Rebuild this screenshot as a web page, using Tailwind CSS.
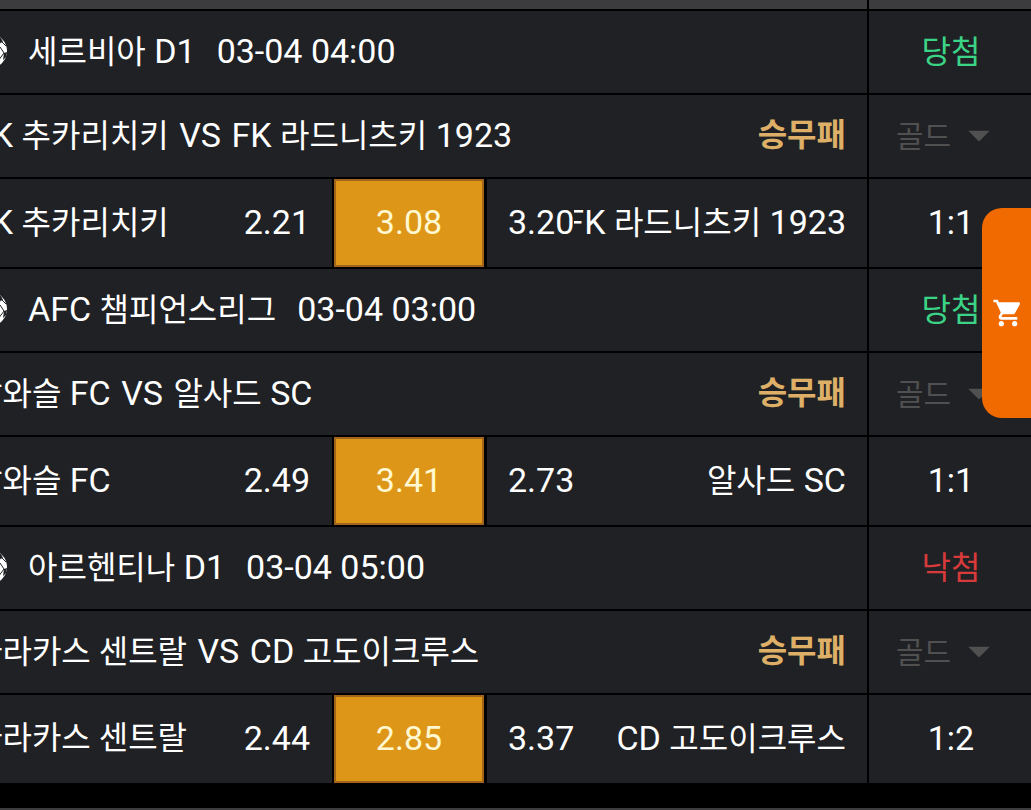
<!DOCTYPE html>
<html lang="ko">
<head>
    <meta charset="UTF-8">
    <meta name="viewport" content="width=device-width, initial-scale=1.0">
    <title>베팅내역</title>
    <script src="https://cdn.jsdelivr.net/npm/@tailwindcss/browser@4"></script>
    <style>
        body {
            font-family: Roboto, 'Noto Sans CJK KR', sans-serif;
        }
    </style>
</head>
<body class="bg-black text-white text-[34px] leading-[40px] min-h-screen flex flex-col overflow-x-hidden">

    <!-- Shared icons -->
    <svg class="hidden" aria-hidden="true">
        <symbol id="ball" viewBox="0 0 34 34">
            <circle cx="17" cy="17" r="17" fill="#fff"/>
            <path d="M17 11l6 4-2 7h-8l-2-7zM25 3l3 1 2 4-3 1-4-3zM9 3L6 4 4 8l3 1 4-3zM31 19l3-1-1 5-3 3zM3 19l-3-1 1 5 3 3zM13 30h8l-1 4h-6z" fill="#202125"/>
            <path d="M17 11V5M23 15l4-6M21 22l4 5M13 22l-4 5M11 15L7 9M29 8l4 4M27 13l4 6M31 19l-6 8-4 3M5 8l-4 4M3 19l6 8 4 3M23 6l-6-1-6 1" stroke="#202125" fill="none"/>
        </symbol>
        <symbol id="caret" viewBox="0 0 22 11">
            <path d="M0 0h22L11 11z" fill="currentColor"/>
        </symbol>
    </svg>

    <main class="-ml-[49px] flex flex-col gap-[2px]">
        <!-- Table head, mostly scrolled away -->
        <div class="grid grid-cols-[minmax(0,1fr)_162px] gap-[2px] h-[9px]">
            <div class="bg-[#3c3c3e]"></div>
            <div class="bg-[#3c3c3e]"></div>
        </div>

        <!-- Match 1 -->
        <section class="grid grid-cols-[minmax(0,1fr)_162px] grid-rows-[82px_82px_88px] gap-[2px] whitespace-nowrap">
            <div class="bg-[#202125] pl-[22px] pr-[21px] pb-[2px] flex items-center">
                <svg class="size-[34px] mr-[21px]"><use href="#ball"/></svg>
                <h2><span class="text-[32px]">세르비아</span> D1</h2>
                <time class="ml-[21px]">03-04 04:00</time>
            </div>
            <div class="bg-[#202125] pl-[2px] flex items-center justify-center text-[32px] text-[#3bd486]">당첨</div>

            <div class="bg-[#202125] pl-[22px] pr-[21px] pb-[2px] flex items-center justify-between">
                <p>FK <span class="text-[32px]">추카리치키</span> <span class="mx-[2px]">VS</span> FK <span class="text-[32px]">라드니츠키</span> 1923</p>
                <strong class="text-[32px] font-bold text-[#deb067]">승무패</strong>
            </div>
            <div class="bg-[#202125] pl-[2px] flex items-center justify-center text-[#505050]">
                <div class="relative">
                    <select aria-label="회원 등급" class="appearance-none bg-transparent text-[30px] pr-[54px]">
                        <option>골드</option>
                    </select>
                    <svg class="absolute right-4 top-1/2 -translate-y-1/2 w-[22px] h-[11px] pointer-events-none"><use href="#caret"/></svg>
                </div>
            </div>

            <div class="grid grid-cols-[381px_150px_minmax(0,1fr)] gap-[2px]">
                <button type="button" class="bg-[#202125] px-[22px] pb-[2px] flex items-center justify-between">
                    <span>FK <span class="text-[32px]">추카리치키</span></span>
                    <span>2.21</span>
                </button>
                <button type="button" class="bg-[#dd9617] border-2 border-[#a0641b] pb-[2px] text-[#fff8d0]">3.08</button>
                <button type="button" class="bg-[#202125] ml-px px-[21px] pb-[2px] flex items-center justify-between">
                    <span>3.20</span>
                    <span class="flex-1 min-w-0 flex justify-end overflow-hidden"><span>FK <span class="text-[32px]">라드니츠키</span> 1923</span></span>
                </button>
            </div>
            <div class="bg-[#202125] pl-[2px] pb-[2px] flex items-center justify-center">1:1</div>
        </section>

        <!-- Match 2 -->
        <section class="grid grid-cols-[minmax(0,1fr)_162px] grid-rows-[82px_82px_88px] gap-[2px] whitespace-nowrap">
            <div class="bg-[#202125] pl-[22px] pr-[21px] pb-[2px] flex items-center">
                <svg class="size-[34px] mr-[21px]"><use href="#ball"/></svg>
                <h2>AFC <span class="text-[32px]">챔피언스리그</span></h2>
                <time class="ml-[21px]">03-04 03:00</time>
            </div>
            <div class="bg-[#202125] pl-[2px] flex items-center justify-center text-[32px] text-[#3bd486]">당첨</div>

            <div class="bg-[#202125] pl-[22px] pr-[21px] pb-[2px] flex items-center justify-between">
                <p><span class="text-[32px]">알와슬</span> FC <span class="mx-[2px]">VS</span> <span class="text-[32px]">알사드</span> SC</p>
                <strong class="text-[32px] font-bold text-[#deb067]">승무패</strong>
            </div>
            <div class="bg-[#202125] pl-[2px] flex items-center justify-center text-[#505050]">
                <div class="relative">
                    <select aria-label="회원 등급" class="appearance-none bg-transparent text-[30px] pr-[54px]">
                        <option>골드</option>
                    </select>
                    <svg class="absolute right-4 top-1/2 -translate-y-1/2 w-[22px] h-[11px] pointer-events-none"><use href="#caret"/></svg>
                </div>
            </div>

            <div class="grid grid-cols-[381px_150px_minmax(0,1fr)] gap-[2px]">
                <button type="button" class="bg-[#202125] px-[22px] pb-[2px] flex items-center justify-between">
                    <span><span class="text-[32px]">알와슬</span> FC</span>
                    <span>2.49</span>
                </button>
                <button type="button" class="bg-[#dd9617] border-2 border-[#a0641b] pb-[2px] text-[#fff8d0]">3.41</button>
                <button type="button" class="bg-[#202125] ml-px px-[21px] pb-[2px] flex items-center justify-between">
                    <span>2.73</span>
                    <span class="flex-1 min-w-0 flex justify-end overflow-hidden"><span><span class="text-[32px]">알사드</span> SC</span></span>
                </button>
            </div>
            <div class="bg-[#202125] pl-[2px] pb-[2px] flex items-center justify-center">1:1</div>
        </section>

        <!-- Match 3 -->
        <section class="grid grid-cols-[minmax(0,1fr)_162px] grid-rows-[82px_82px_88px] gap-[2px] whitespace-nowrap">
            <div class="bg-[#202125] pl-[22px] pr-[21px] pb-[2px] flex items-center">
                <svg class="size-[34px] mr-[21px]"><use href="#ball"/></svg>
                <h2><span class="text-[32px]">아르헨티나</span> D1</h2>
                <time class="ml-[21px]">03-04 05:00</time>
            </div>
            <div class="bg-[#202125] pl-[2px] flex items-center justify-center text-[32px] text-[#d63a3a]">낙첨</div>

            <div class="bg-[#202125] pl-[22px] pr-[21px] pb-[2px] flex items-center justify-between">
                <p><span class="text-[32px]">바라카스 센트랄</span> <span class="mx-[2px]">VS</span> CD <span class="text-[32px]">고도이크루스</span></p>
                <strong class="text-[32px] font-bold text-[#deb067]">승무패</strong>
            </div>
            <div class="bg-[#202125] pl-[2px] flex items-center justify-center text-[#505050]">
                <div class="relative">
                    <select aria-label="회원 등급" class="appearance-none bg-transparent text-[30px] pr-[54px]">
                        <option>골드</option>
                    </select>
                    <svg class="absolute right-4 top-1/2 -translate-y-1/2 w-[22px] h-[11px] pointer-events-none"><use href="#caret"/></svg>
                </div>
            </div>

            <div class="grid grid-cols-[381px_150px_minmax(0,1fr)] gap-[2px]">
                <button type="button" class="bg-[#202125] px-[22px] pb-[2px] flex items-center justify-between">
                    <span class="text-[32px]">바라카스 센트랄</span>
                    <span>2.44</span>
                </button>
                <button type="button" class="bg-[#dd9617] border-2 border-[#a0641b] pb-[2px] text-[#fff8d0]">2.85</button>
                <button type="button" class="bg-[#202125] ml-px px-[21px] pb-[2px] flex items-center justify-between">
                    <span>3.37</span>
                    <span class="flex-1 min-w-0 flex justify-end overflow-hidden"><span>CD <span class="text-[32px]">고도이크루스</span></span></span>
                </button>
            </div>
            <div class="bg-[#202125] pl-[2px] pb-[2px] flex items-center justify-center">1:2</div>
        </section>
    </main>

    <footer class="mt-auto h-[2px] bg-[#3c3c3e]"></footer>

    <!-- Cart tab -->
    <button type="button" aria-label="카트" class="fixed right-0 top-52 w-[49px] h-[210px] pl-[2px] rounded-l-[20px] bg-[#f06a00] flex items-center justify-center">
        <svg class="size-8" viewBox="0 0 24 24" fill="#fff">
            <path d="M7 18c-1.1 0-1.99.9-1.99 2S5.9 22 7 22s2-.9 2-2-.9-2-2-2zM1 2v2h2l3.6 7.59-1.35 2.45c-.16.28-.25.61-.25.96 0 1.1.9 2 2 2h12v-2H7.42c-.14 0-.25-.11-.25-.25l.03-.12.9-1.63h7.45c.75 0 1.41-.41 1.75-1.03l3.58-6.49c.08-.14.12-.31.12-.48 0-.55-.45-1-1-1H5.21l-.94-2H1zm16 16c-1.1 0-1.99.9-1.99 2s.89 2 1.99 2 2-.9 2-2-.9-2-2-2z"/>
        </svg>
    </button>

</body>
</html>
